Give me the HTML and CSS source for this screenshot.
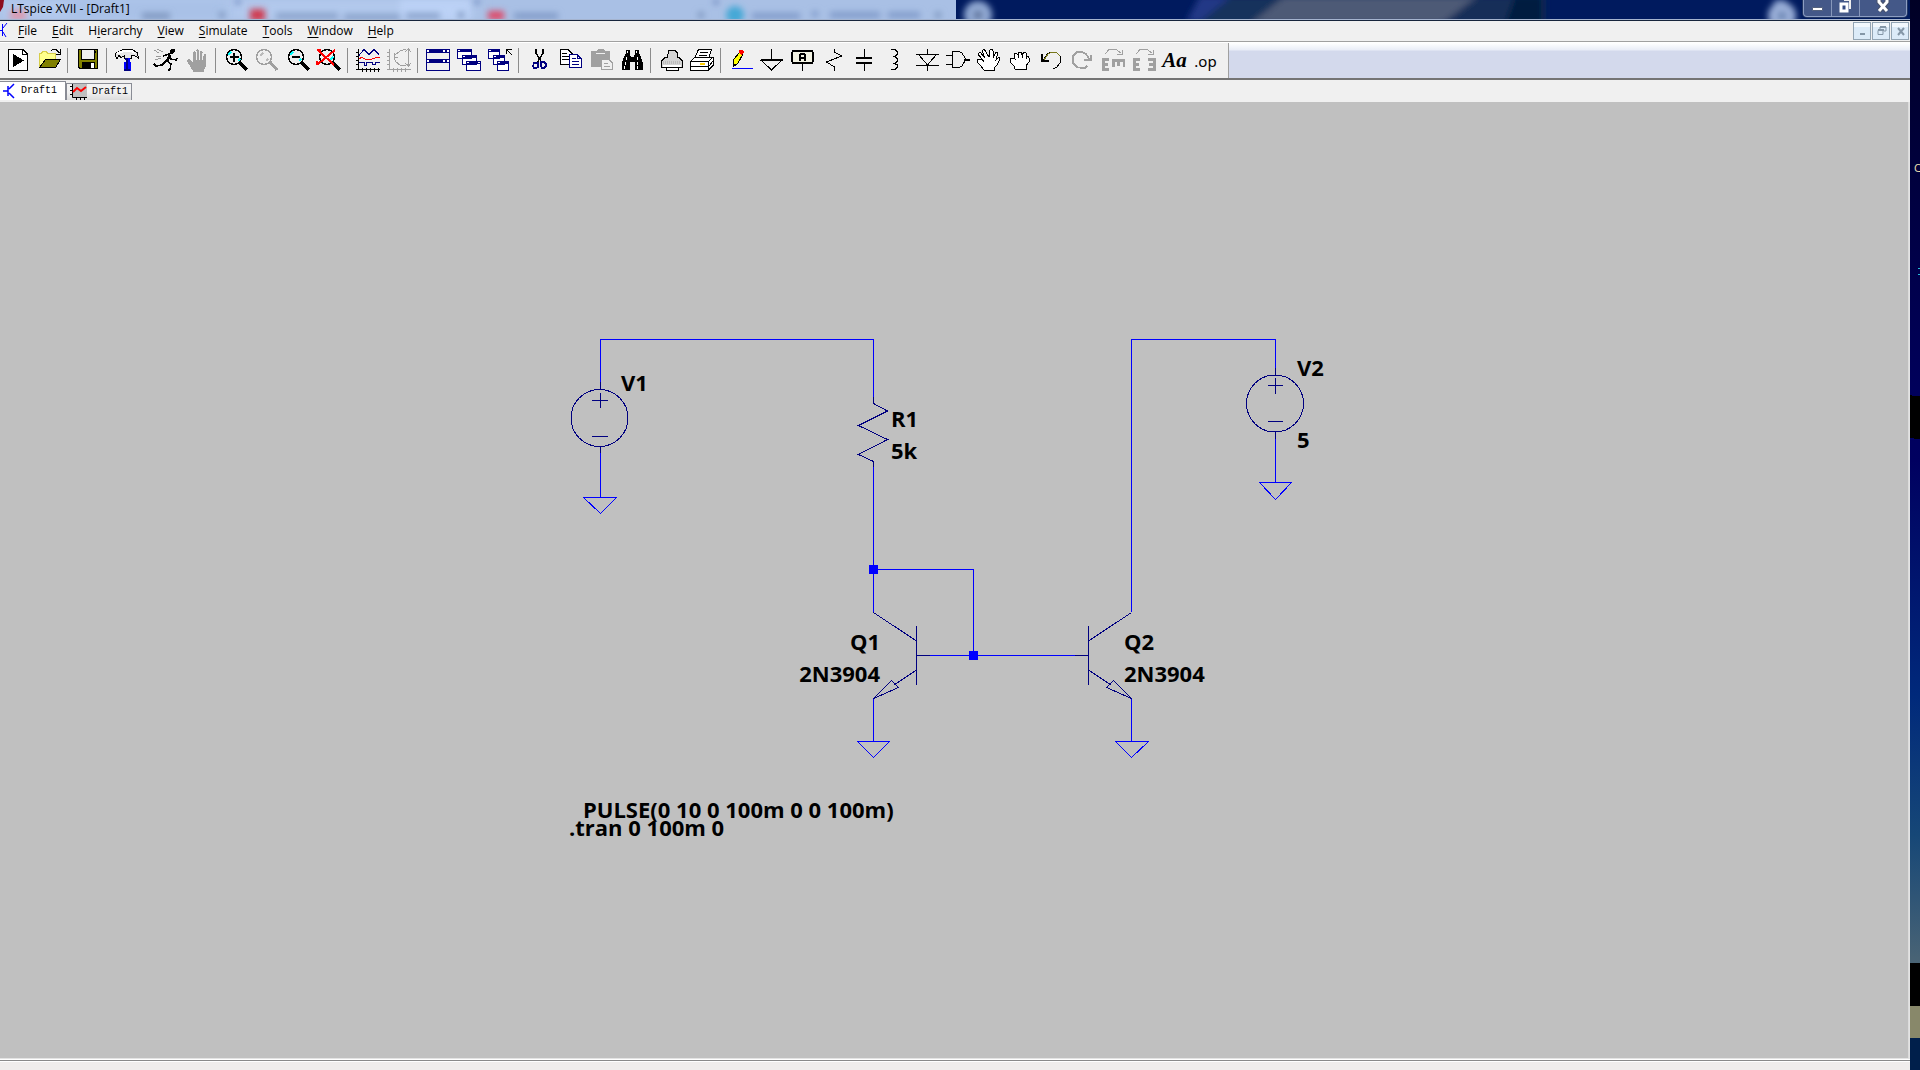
FILE: index.html
```
<!DOCTYPE html>
<html lang="en">
<head>
<meta charset="utf-8">
<title>LTspice XVII - [Draft1]</title>
<link rel="stylesheet" href="styles.css">
</head>
<body>
<div class="screen">
<main class="window">
  <header class="titlebar">
    <svg class="glass" aria-hidden="true">
      <defs>
        <filter id="soft" x="-20%" y="-100%" width="140%" height="300%"><feGaussianBlur stdDeviation="3"/></filter>
        <filter id="softer" x="-20%" y="-100%" width="140%" height="300%"><feGaussianBlur stdDeviation="8 3"/></filter>
      </defs>
      <rect width="956" height="20" fill="#a9c0e5"/>
      <rect width="474" height="20" fill="#b2c9ed" filter="url(#softer)"/>
      <rect x="400" width="70" height="20" fill="#bcd2f6" filter="url(#soft)"/>
      <rect x="70" width="160" height="20" fill="#a9c1e7" filter="url(#softer)"/>
      <g filter="url(#soft)">
        <rect x="10" y="10" width="16" height="10" fill="#dc98ae"/>
        <rect x="250" y="9" width="15" height="12" fill="#d03a50"/>
        <path d="M276 16H338M344 17H400M406 16H440" stroke="#87a0c9" stroke-width="6"/>
        <path d="M142 16H170M219 15H225M458 15H464M698 15H704M935 15H941" stroke="#7d95bd" stroke-width="6"/>
        <rect x="488" y="11" width="16" height="9" fill="#df4868"/>
        <path d="M514 16H558" stroke="#7f99c6" stroke-width="6"/>
        <circle cx="735" cy="15" r="9" fill="#45a8d6"/>
        <path d="M752 16H800M812 14H818M830 15H880M888 15H920" stroke="#7f9ac9" stroke-width="6"/>
        <path d="M238 0V4M477 0V4M716 0V4" stroke="#506cab" stroke-width="4"/>
      </g>
      <g filter="url(#soft)">
        <circle cx="978" cy="15" r="14" fill="#91a9d3"/><circle cx="978" cy="15" r="4" fill="#52668f"/>
        <path d="M1200 -4H1232L1200 22H1186Z" fill="#213986"/>
        <path d="M1232 -4H1290L1254 24H1198Z" fill="#17335b"/>
        <path d="M1285 -4H1478L1442 24H1250Z" fill="#4d5a76"/>
        <path d="M1478 -4H1545V24H1442Z" fill="#122f59"/>
        <path d="M1515 -4H1542V24H1505Z" fill="#001d41"/>
        <path d="M1780 0V10" stroke="#718bc0" stroke-width="12"/>
        <circle cx="1782" cy="16" r="14" fill="#9aafd8"/><circle cx="1782" cy="16" r="4" fill="#607eac"/>
      </g>
      <path d="M0 0H4L3 7 0 12Z" fill="#8c0d20"/>
    </svg>
    <h1 class="title">LTspice XVII - [Draft1]</h1>
    <div class="caption">
      <button type="button" class="cap cap-min" aria-label="Minimize"><svg width="13" height="17"><path d="M1.500 7.500h10v3h-10z" fill="#fff" stroke="#53617d"/></svg></button>
      <button type="button" class="cap cap-max" aria-label="Restore"><svg width="13" height="17"><path d="M5 0H11V9" fill="none" stroke="#eee" stroke-width="2"/><path d="M2 4H8V11H2Z" fill="#344b82" stroke="#fff" stroke-width="3"/></svg></button>
      <button type="button" class="cap cap-close" aria-label="Close"><svg width="14" height="17"><path d="M3 0V2L11 11M11 0V2L3 11" fill="none" stroke="#4a536d" stroke-width="5"/><path d="M3 0V2L11 11M11 0V2L3 11" fill="none" stroke="#fff" stroke-width="3"/></svg></button>
    </div>
  </header>

  <nav class="menubar" aria-label="Main menu">
    <svg class="doc-icon" width="8" height="18" aria-hidden="true"><path d="M2.500 2V14M3 6L7 1M3 10L6 15M0 8.500H2" fill="none" stroke="#00f" stroke-width="1"/></svg>
    <div class="menus">
      <button type="button"><u>F</u>ile</button>
      <button type="button"><u>E</u>dit</button>
      <button type="button">H<u>i</u>erarchy</button>
      <button type="button"><u>V</u>iew</button>
      <button type="button"><u>S</u>imulate</button>
      <button type="button"><u>T</u>ools</button>
      <button type="button"><u>W</u>indow</button>
      <button type="button"><u>H</u>elp</button>
    </div>
    <div class="mdi">
      <button type="button" aria-label="Minimize document"><svg width="11" height="12"><path d="M3 8H8V10H3Z" fill="#8597a7"/></svg></button>
      <button type="button" aria-label="Restore document"><svg width="11" height="12"><path d="M4 4V2H10V6H8M2 5.500H7V9.500H2Z" fill="none" stroke="#8597a7" stroke-width="1"/><path d="M4 2H10M2 5H8" stroke="#8597a7" stroke-width="2"/></svg></button>
      <button type="button" aria-label="Close document"><svg width="11" height="12"><path d="M3 3L9 10M9 3L3 10" stroke="#8597a7" stroke-width="2"/></svg></button>
    </div>
  </nav>

  <div class="toolrow">
    <div class="toolbar" role="toolbar" aria-label="Tools">
      <button type="button" aria-label="New schematic"><svg viewBox="0 0 25 25"><path d="M3.500 1.500H18L22.500 6V22.500H3.500Z" fill="#fff" stroke="#000"/><path d="M17.500 2V6.500H22" fill="none" stroke="#000"/><path d="M8 6L19 12.500 8 19Z"/></svg></button>
      <button type="button" aria-label="Open"><svg viewBox="0 0 25 25"><path d="M3.500 19.500V5.500H5L7 3.500H10L12 5.500H19.500V11" fill="#ffff8c" stroke="#d7ce4a"/><path d="M3.500 19.500L9.500 11.500H24.500L19.500 19.500Z" fill="#808000" stroke="#000"/><path d="M15 2.500L17 1.500H20L23.500 5M24.500 1V6.500H20" fill="none" stroke="#000"/></svg></button>
      <span class="sep"></span>
      <button type="button" aria-label="Save"><svg viewBox="0 0 25 25"><path d="M3.500 1.500H22.500V20.500H5L3.500 19Z" fill="#808000" stroke="#000"/><path d="M7 2H19V11H7Z" fill="#f0f0f0"/><path d="M6.500 2V11.500H19.500V2M20.500 3V5" fill="none" stroke="#000"/><path d="M7 14H20V21H7Z"/><path d="M16 15H19V20H16Z" fill="#fff"/></svg></button>
      <span class="sep"></span>
      <button type="button" aria-label="Control panel"><svg viewBox="0 0 25 25"><path d="M1.500 5.500L5 3.500 9 1.500H18L23 4.500 24.500 10 20 7.500H17.500V10.500H10.500V8L7 9.500 5 7.500 3 10.500 1.500 8Z" fill="#e6e6e6" stroke="#000"/><path d="M3 5L8 4 10 2.500H17L21 5" fill="none" stroke="#fff" stroke-width="2"/><path d="M12 10H16V14H17V23H10V14H12Z" fill="#00f"/><path d="M10 22H16M11 11H13V21" fill="none" stroke="#000080" stroke-width="2"/></svg></button>
      <span class="sep"></span>
      <button type="button" aria-label="Run"><svg viewBox="0 0 25 25"><path d="M18 1H22V4L19 6H17V3Z"/><path d="M17 7L14 13" stroke="#000" stroke-width="3"/><path d="M14 13L18 16 17 21 15 23M13 13L9 17 3 18 1 16M10 8L16 6 18 11 23 12 24 10" fill="none" stroke="#000" stroke-width="1.500"/><path d="M1 2L6 5M4 1L10 4M3 8H8M2 12L8 10" stroke="#999"/></svg></button>
      <button type="button" aria-label="Halt"><svg viewBox="0 0 25 25"><path d="M9 23L6 18 3 13 4 11H6L9 15V4L10 3 12 4V11V2L13 1 15 2V11L16 3H18L19 5V11L20 6H22L22 18 20 22V24H9Z" fill="#a0a0a0"/><path d="M12.500 3V12M15.500 3V12M18.500 5V12" stroke="#eee"/></svg></button>
      <span class="sep"></span>
      <button type="button" aria-label="Zoom in"><svg viewBox="0 0 25 25"><path d="M16 14L24 22" stroke="#000" stroke-width="3"/><circle cx="11" cy="9" r="7.500" fill="#efefef" stroke="#000" stroke-width="1.500"/><path d="M5 7L8 4M15 13L17 11" stroke="#0ff" stroke-width="2"/><path d="M7 9H16M11 5V14" stroke="#000" stroke-width="2"/></svg></button>
      <button type="button" aria-label="Pan"><svg viewBox="0 0 25 25"><path d="M16 14L23 22" stroke="#a0a0a0" stroke-width="3"/><circle cx="10" cy="9" r="7.500" fill="#efefef" stroke="#a0a0a0" stroke-width="1.500"/><path d="M6 8L9 5M12 13L14 11" stroke="#bbb" stroke-width="2"/></svg></button>
      <button type="button" aria-label="Zoom out"><svg viewBox="0 0 25 25"><path d="M16 14L24 22" stroke="#000" stroke-width="3"/><circle cx="11" cy="9" r="7.500" fill="#efefef" stroke="#000" stroke-width="1.500"/><path d="M5 7L8 4M14 13L16 11" stroke="#0ff" stroke-width="2"/><path d="M7 9H15" stroke="#000" stroke-width="2"/></svg></button>
      <button type="button" aria-label="Zoom full extents"><svg viewBox="0 0 25 25"><path d="M16 14L24 22" stroke="#000" stroke-width="3"/><circle cx="11" cy="9" r="7.500" fill="#efefef" stroke="#000" stroke-width="1.500"/><path d="M13 13L17 9" stroke="#0ff" stroke-width="2"/><path d="M2 2L18 17M19 2L2 16M1 2H5M1 13V17" fill="none" stroke="#f00" stroke-width="2"/></svg></button>
      <span class="sep"></span>
      <button type="button" aria-label="Plot"><svg viewBox="0 0 25 25"><path d="M3.500 1V22M1 21.500H25M1 4.500H3M1 8.500H3M1 12.500H3M1 16.500H3M7.500 20V24M11.500 20V24M15.500 20V24M19.500 20V24M23.500 20V24" fill="none" stroke="#000"/><path d="M4 7.500L9 1.500 14 6.500 19 1.500 24 6.500M4 14.500H9V17.500H11V14.500H17V16.500H20V14.500H25" fill="none" stroke="#000080"/><path d="M4 10.500L7 9.500 11 11.500H16L21 9.500H25" fill="none" stroke="#f00"/></svg></button>
      <button type="button" aria-label="Autorange"><svg viewBox="0 0 25 25"><path d="M3.500 1V22M1 21.500H25M1 4.500H3M1 8.500H3M1 12.500H3M1 16.500H3M7.500 20V24M11.500 20V24M15.500 20V24M19.500 20V24M22.500 1V18M19 4L22.500 1 25 4M19 15L22.500 18 25 15M20 1L14 3 9 7 8 10 10 14 14 17 20 18M8 5V9H12" fill="none" stroke="#a0a0a0"/></svg></button>
      <span class="sep"></span>
      <button type="button" aria-label="Tile windows"><svg viewBox="0 0 25 25"><path d="M1.500 1.500H24.500V22.500H1.500Z" fill="#efefef" stroke="#000080"/><path d="M1 1H25V5H1ZM1 11H25V15H1Z" fill="#000080"/><path d="M2 2H4V4H2ZM18 2H20V4H18ZM22 2H24V4H22ZM2 12H4V14H2ZM18 12H20V14H18ZM22 12H24V14H22Z" fill="#fff"/></svg></button>
      <button type="button" aria-label="Cascade windows"><svg viewBox="0 0 25 25"><g fill="#fff" stroke="#000080"><path d="M1.500 1.500H15.500V10.500H1.500ZM6.500 7.500H20.500V16.500H6.500ZM10.500 13.500H24.500V22.500H10.500Z"/></g><path d="M1 1H16V4H1ZM6 7H21V10H6ZM10 13H25V16H10Z" fill="#000080"/><path d="M2 2.500H4M7 8.500H9M11 14.500H13M22 14.500H24" stroke="#fff"/></svg></button>
      <button type="button" aria-label="Close all windows"><svg viewBox="0 0 25 25"><g fill="#fff" stroke="#000080"><path d="M1.500 1.500H12.500V10.500H1.500ZM6.500 7.500H17.500V16.500H6.500ZM10.500 13.500H21.500V22.500H10.500Z"/></g><path d="M1 1H13V4H1ZM6 7H18V10H6ZM10 13H22V16H10Z" fill="#000080"/><path d="M2 2.500H4M7 8.500H9M11 14.500H13" stroke="#fff"/><path d="M19.500 6V1.500H25M20 2L25 7" fill="none" stroke="#000"/></svg></button>
      <span class="sep"></span>
      <button type="button" aria-label="Cut"><svg viewBox="0 0 25 25"><path d="M10 1V5L16 15M17 1V5L11 15" fill="none" stroke="#000" stroke-width="1.500"/><path d="M8 15H12V19L10 20H8L7 18ZM15 14H18L20 16V18L18 20H16L15 18Z" fill="none" stroke="#000080" stroke-width="1.500"/></svg></button>
      <button type="button" aria-label="Copy"><svg viewBox="0 0 25 25"><path d="M3.500 1.500H11L15.500 6V16.500H3.500Z" fill="#fff" stroke="#000"/><path d="M5 5.500H10M5 8.500H12M5 11.500H12" stroke="#000"/><path d="M12.500 6.500H20L24.500 11V19.500H12.500Z" fill="#fff" stroke="#000080"/><path d="M20.500 7V10.500H24M15 10.500H19M15 13.500H22M15 16.500H22" fill="none" stroke="#000080"/></svg></button>
      <button type="button" aria-label="Paste"><svg viewBox="0 0 25 25"><path d="M3 3H8L10 1H15L17 3H22V19H3Z" fill="#a0a0a0"/><path d="M8 5H17" stroke="#eee"/><path d="M13.500 11.500H21L24.500 15V21.500H13.500Z" fill="#efefef" stroke="#a0a0a0"/><path d="M16 15.500H20M16 18.500H22" stroke="#a0a0a0"/></svg></button>
      <button type="button" aria-label="Find"><svg viewBox="0 0 25 25"><path d="M7 2H11V6L12 9H15L16 6V2H20V5L22 9 24 15V22H16V14H11V22H3V15L5 9 7 5Z"/><path d="M8.500 3V5M17.500 3V5M7.500 9V12M6.500 14V17M5.500 18V21M18.500 9V12M18.500 14V17M18.500 18V21" stroke="#fff"/></svg></button>
      <span class="sep"></span>
      <button type="button" aria-label="Print"><svg viewBox="0 0 25 25"><path d="M3.500 19.500V13L7 9.500H9.500L10.500 2.500H17L19.500 5V9.500H21L24.500 13V19.500H20.500V22.500H8.500V19.500Z" fill="#d4d4d4" stroke="#000"/><path d="M4 19.500H24M8 22.500H20" stroke="#000"/><path d="M5 18H23M9 21H20" stroke="#fff" stroke-width="2"/><path d="M5 14H23" stroke="#bbb" stroke-dasharray="1 1" stroke-width="3"/></svg></button>
      <button type="button" aria-label="Print setup"><svg viewBox="0 0 25 25"><path d="M1.500 13.500L6 9 9.500 1.500H22.500L20 9H24.500V17L19 22.500H1.500Z" fill="#fff" stroke="#000"/><path d="M1 13.500H19.500V22M20 13L24 9M6 9.500H19M11 4.500H19M10 7.500H18M2 18.500H19M20 18L24 13" fill="none" stroke="#000"/><path d="M11 16H16" stroke="#fc0" stroke-width="2"/></svg></button>
      <span class="sep"></span>
      <button type="button" aria-label="Wire"><svg viewBox="0 0 25 25"><path d="M4 20.500H25" stroke="#00f"/><path d="M12 4L15 6 10 15 5 19V12Z" fill="#ff0" stroke="#000"/><path d="M11 2H14L16 4 14 7 11 5Z" fill="#f00"/><path d="M5 16V19L8 17Z"/></svg></button>
      <button type="button" aria-label="Ground"><svg viewBox="0 0 25 25"><path d="M12.500 1V12M1 12.500H24M3 13L12.500 22 22 13" fill="none" stroke="#000"/><path d="M2 12H24" stroke="#000" stroke-width="2"/></svg></button>
      <button type="button" aria-label="Label net"><svg viewBox="0 0 25 25"><path d="M3 3H22L23 5V13L22 15H3L2 13V5Z" fill="#f4f4e4" stroke="#000" stroke-width="2"/><path d="M12.500 16V23" stroke="#000"/><path d="M10 13V7L11 6H14L15 7V13M10 10H15" fill="none" stroke="#000" stroke-width="1.500"/></svg></button>
      <button type="button" aria-label="Resistor"><svg viewBox="0 0 25 25"><path d="M13.500 1V4L20.500 8 5.500 14 13.500 19V23" fill="none" stroke="#000"/></svg></button>
      <button type="button" aria-label="Capacitor"><svg viewBox="0 0 25 25"><path d="M12.500 1V10M12.500 16V23" stroke="#000"/><path d="M4 10H20M4 15H20" stroke="#000" stroke-width="2"/></svg></button>
      <button type="button" aria-label="Inductor"><svg viewBox="0 0 25 25"><path d="M8 1.500H12L14.500 4V6L12 8.500H10M12 8.500L14.500 11V13L12 15.500H10M12 15.500L14.500 17V19L12 21.500H8" fill="none" stroke="#000" stroke-width="1.500"/></svg></button>
      <button type="button" aria-label="Diode"><svg viewBox="0 0 25 25"><path d="M13.500 1V6M13.500 17V23M2 6.500H25M2 17.500H25M5 7L13.500 17 22 7" fill="none" stroke="#000"/></svg></button>
      <button type="button" aria-label="Component"><svg viewBox="0 0 25 25"><path d="M7 3.500H14L17 5 20 10V13L17 18 14 19.500H7ZM1 7.500H7M1 16.500H7" fill="none" stroke="#000"/><path d="M19 12H25" stroke="#000" stroke-width="2"/></svg></button>
      <button type="button" aria-label="Move"><svg viewBox="0 0 25 25"><path d="M8 22L5 18 1 14 2 11H5L8 14 2 6 4 4 9 10 6 3 8 1 13 9 14 2 16 1 17 3V10L20 4 22 5 20 12 23 9 24 11 21 17 18 20V22Z" fill="#fff" stroke="#000"/></svg></button>
      <button type="button" aria-label="Drag"><svg viewBox="0 0 25 25"><path d="M8 21L7 18 3 14V10H6L8 11 7 6 9 5 11 7 12 4H14L15 7 17 4 19 5V8H21L22 10V14L19 18V21Z" fill="#fff" stroke="#000"/><path d="M11.500 7V10M15.500 7V10M19.500 8V11" stroke="#000"/></svg></button>
      <button type="button" aria-label="Undo"><svg viewBox="0 0 25 25"><path d="M5 13L9 6 13 4H18L22 8V15L19 19 15 21" fill="none" stroke="#000"/><path d="M6 12L10 6 14 4H18L22 8" fill="none" stroke="#77771a"/><path d="M4 6V13H11" fill="none" stroke="#000" stroke-width="2"/></svg></button>
      <button type="button" aria-label="Redo"><svg viewBox="0 0 25 25"><path d="M21 12L17 6 13 4H8L4 8V15L8 19 12 20H16L18 18" fill="none" stroke="#a0a0a0" stroke-width="1.500"/><path d="M22 7V12H15" fill="none" stroke="#a0a0a0" stroke-width="2"/></svg></button>
      <button type="button" aria-label="Rotate"><svg viewBox="0 0 25 25"><path d="M9 11H3V21H9M3 16H8" fill="none" stroke="#a0a0a0" stroke-width="3"/><path d="M13 19V12H24V19M18 12V18" fill="none" stroke="#a0a0a0" stroke-width="3"/><path d="M5 6L9 1.500H16L21 5M22 2V6.500H17" fill="none" stroke="#a0a0a0"/></svg></button>
      <button type="button" aria-label="Mirror"><svg viewBox="0 0 25 25"><path d="M9 11H3V21H9M3 16H8M17 11H23V21H17M23 16H18" fill="none" stroke="#a0a0a0" stroke-width="3"/><path d="M5 6L9 1.500H16L21 5M22 2V6.500H17" fill="none" stroke="#a0a0a0"/></svg></button>
      <button type="button" class="word word-text">Aa</button>
      <button type="button" class="word word-op">.op</button>
    </div>
  </div>

  <div class="tabs" role="tablist">
    <button type="button" role="tab" aria-selected="true" class="tab tab-on"><svg width="14" height="16"><path d="M6 3V13M7 6L12 1M7 10L12 15M1 8H6" fill="none" stroke="#00f" stroke-width="1.500"/></svg>Draft1</button>
    <button type="button" role="tab" aria-selected="false" class="tab"><svg width="17" height="16"><path d="M3 0H17V13H3Z" fill="#c0c0c0"/><path d="M2.500 0V13.500H17M0 2.500H2M0 6.500H2M0 10.500H2M6.500 13V16M10.500 13V16M14.500 13V16" fill="none" stroke="#000"/><path d="M3 8L7 4 11 7 16 3" fill="none" stroke="#f00" stroke-width="2"/></svg>Draft1</button>
  </div>

  <section class="canvas" aria-label="Schematic">
    <svg class="schematic">
      <g transform="translate(0 -102)">
        <g class="wire">
          <path d="M600.500 382V339.500H873.500V397M600.500 453V497M873.500 467V612M873.500 569.500H973.500V655.500M930 655.500H1075M873.500 698V741M1131.500 698V741M1131.500 612V339.500H1275.500V368M1275.500 439V482"/>
          <path d="M583.500 497.500H616.500L600.500 513.500ZM857.500 741.500H889.500L873.500 757.500ZM1115.500 741.500H1148.500L1131.500 757.500ZM1259.500 482.500H1291.500L1275.500 499.500Z"/>
        </g>
        <g class="part">
          <circle cx="599.500" cy="418" r="28.500"/>
          <path d="M600.500 382V389M600.500 447V453M592 400.500H608M600.500 393V408M592 436.500H608"/>
          <circle cx="1275" cy="403.500" r="28.500"/>
          <path d="M1275.500 368V375M1275.500 432V439M1268 385.500H1283M1275.500 378V394M1268 421.500H1283"/>
          <path d="M873.500 397V403.500L887.500 411 858.500 425.500 887.500 439.500 858.500 454.500 873.500 461.500V467"/>
          <path d="M873.500 612.500L916.500 641M916.500 626V685M916.500 655.500H930M916.500 670L894 685M873.500 698.500L891.500 680.500 898.500 687.500Z"/>
          <path d="M1131.500 612.500L1088.500 641M1088.500 626V685M1088.500 655.500H1075M1088.500 670L1111 685M1131.500 698.500L1113.500 680.500 1106.500 687.500Z"/>
        </g>
        <path d="M869 565H878V574H869ZM969 651H978V660H969Z" fill="#00f"/>
        <g class="label">
          <text x="621" y="391">V1</text>
          <text x="891" y="427">R1</text>
          <text x="891" y="459">5k</text>
          <text x="1297" y="376">V2</text>
          <text x="1297" y="448">5</text>
          <text x="880" y="650" text-anchor="end">Q1</text>
          <text x="880" y="682" text-anchor="end">2N3904</text>
          <text x="1124" y="650">Q2</text>
          <text x="1124" y="682">2N3904</text>
          <text x="583" y="818">PULSE(0 10 0 100m 0 0 100m)</text>
          <text x="569" y="836">.tran 0 100m 0</text>
        </g>
      </g>
    </svg>
  </section>
  <footer class="status"></footer>
</main>
<aside class="desktop" aria-hidden="true">
  <span class="icon-caption">C</span>
  <span class="icon-dots"></span>
</aside>
</div>
</body>
</html>
```
FILE: styles.css
```
* { box-sizing: border-box; }
body {
  margin: 0;
  overflow: hidden;
  background: #000028;
  color: #000;
  font: 12px/16px "Open Sans", "Noto Sans", sans-serif;
}
button {
  margin: 0;
  padding: 0;
  border: 0;
  background: none;
  color: inherit;
  font: inherit;
}
svg { display: block; flex: none; }
.screen {
  display: grid;
  grid-template-columns: minmax(0, 1fr) 10px;
  min-height: 100vh;
}
.window {
  display: flex;
  flex-direction: column;
  background: #f0f0f0;
}

/* Title bar */
.titlebar {
  position: relative;
  display: flex;
  justify-content: space-between;
  height: 21px;
  overflow: hidden;
  background: #001a5e;
  border-bottom: 1px solid #17253c;
  box-shadow: inset 0 -1px #a5b4cf;
}
.glass {
  position: absolute;
  inset: 0;
  width: 100%;
  height: 19px;
}
.title {
  position: relative;
  margin: 0;
  padding: 1px 0 0 11px;
  font-size: 12px;
  font-weight: 400;
  line-height: 16px;
}
.caption {
  position: relative;
  display: flex;
  height: 17px;
  margin-right: 3px;
  border: 1px solid #8c9dc2;
  border-top: 0;
  border-radius: 0 0 4px 4px;
  background: #445888;
  box-shadow: 0 0 0 1px #223765;
}
.cap {
  display: flex;
  justify-content: center;
  width: 28px;
  border-right: 1px solid #8797bb;
}
.cap-close { width: 46px; border-right: 0; }

/* Menu bar */
.menubar {
  display: flex;
  align-items: center;
  height: 21px;
  background: #f0f0f0;
  border-bottom: 1px solid #a0a0a0;
}
.doc-icon { width: 8px; }
.menus {
  display: flex;
  gap: 15px;
  margin-left: 10px;
  flex: 1;
}
.menus u { text-underline-offset: 2px; }
.mdi { display: flex; gap: 1px; margin-right: 1px; }
.mdi button {
  display: grid;
  place-items: center;
  width: 18px;
  height: 18px;
  border: 1px solid #93a5b4;
  background: linear-gradient(#f2f8fd 25%, #dcebf8 25%);
}

/* Tool bar */
.toolrow {
  display: flex;
  height: 38px;
  border-top: 1px solid #fff;
  border-bottom: 2px solid #747474;
  background: linear-gradient(#fff, #e9edf7 7px, #d3d9ec 8px);
}
.toolbar {
  display: flex;
  align-items: center;
  padding: 0 7px 0 2px;
  background: #f0f0f0;
  border-right: 1px solid #a0a0a0;
}
.toolbar button {
  display: grid;
  place-items: center;
  width: 31px;
  height: 35px;
}
.toolbar svg { width: 25px; height: 25px; shape-rendering: crispEdges; }
.sep {
  width: 8px;
  height: 25px;
  background: linear-gradient(90deg, transparent 3px, #8c8c8c 3px 4px, transparent 4px);
}
.toolbar .word-text { font: italic 700 21px/25px "Liberation Serif", serif; }
.toolbar .word-op { font: 400 15px/24px "Noto Sans", sans-serif; }

/* Document tabs */
.tabs {
  display: flex;
  align-items: flex-start;
  height: 22px;
  padding-top: 1px;
}
.tab {
  display: flex;
  align-items: center;
  gap: 5px;
  width: 66px;
  height: 17px;
  margin-top: 2px;
  padding-left: 3px;
  border: 1px solid #898c95;
  border-bottom: 0;
  background: linear-gradient(#f2f2f2 50%, #dcdcdc);
  font: 10px/16px "Liberation Mono", monospace;
}
.tab-on {
  height: 19px;
  margin-top: 0;
  padding-left: 2px;
  border-left: 0;
  background: #fff;
}

/* Schematic */
.canvas {
  flex: 1;
  display: flex;
  background: #c0c0c0;
  border-right: 1px solid #e3e3e3;
  box-shadow: inset -1px 0 #dcdcdc;
}
.schematic {
  flex: 1;
  min-height: 760px;
}
.wire, .part { fill: none; stroke-width: 1; shape-rendering: crispEdges; }
.wire { stroke: #00f; }
.part { stroke: #000080; }
.label { font: 700 22px "Open Sans", "Noto Sans", sans-serif; white-space: pre; }
.status {
  height: 12px;
  border-top: 1px solid #e3e3e3;
  background: linear-gradient(#fff 1px, #8a8a8a 1px 2px, #fff 2px 3px, #f0edec 3px);
}

/* Sliver of desktop beside the window */
.desktop {
  position: relative;
  overflow: hidden;
  background:
    linear-gradient(transparent 90%, #000 90% 94%, #88886a 94% 97%, #001f4b 97%),
    linear-gradient(5deg, transparent 59%, #000 59% 63%, transparent 63%),
    linear-gradient(#000025, #00005c 37%, #000060 43%, #00297b 65%, #164777 78%, #4a6475 90%);
}
.icon-caption {
  position: absolute;
  top: 160px;
  left: 4px;
  color: #f3e2b5;
  font-size: 11px;
}
.icon-dots {
  position: absolute;
  top: 268px;
  left: 8px;
  width: 2px;
  height: 7px;
  border: solid #27bdd8;
  border-width: 1px 0;
}
```
